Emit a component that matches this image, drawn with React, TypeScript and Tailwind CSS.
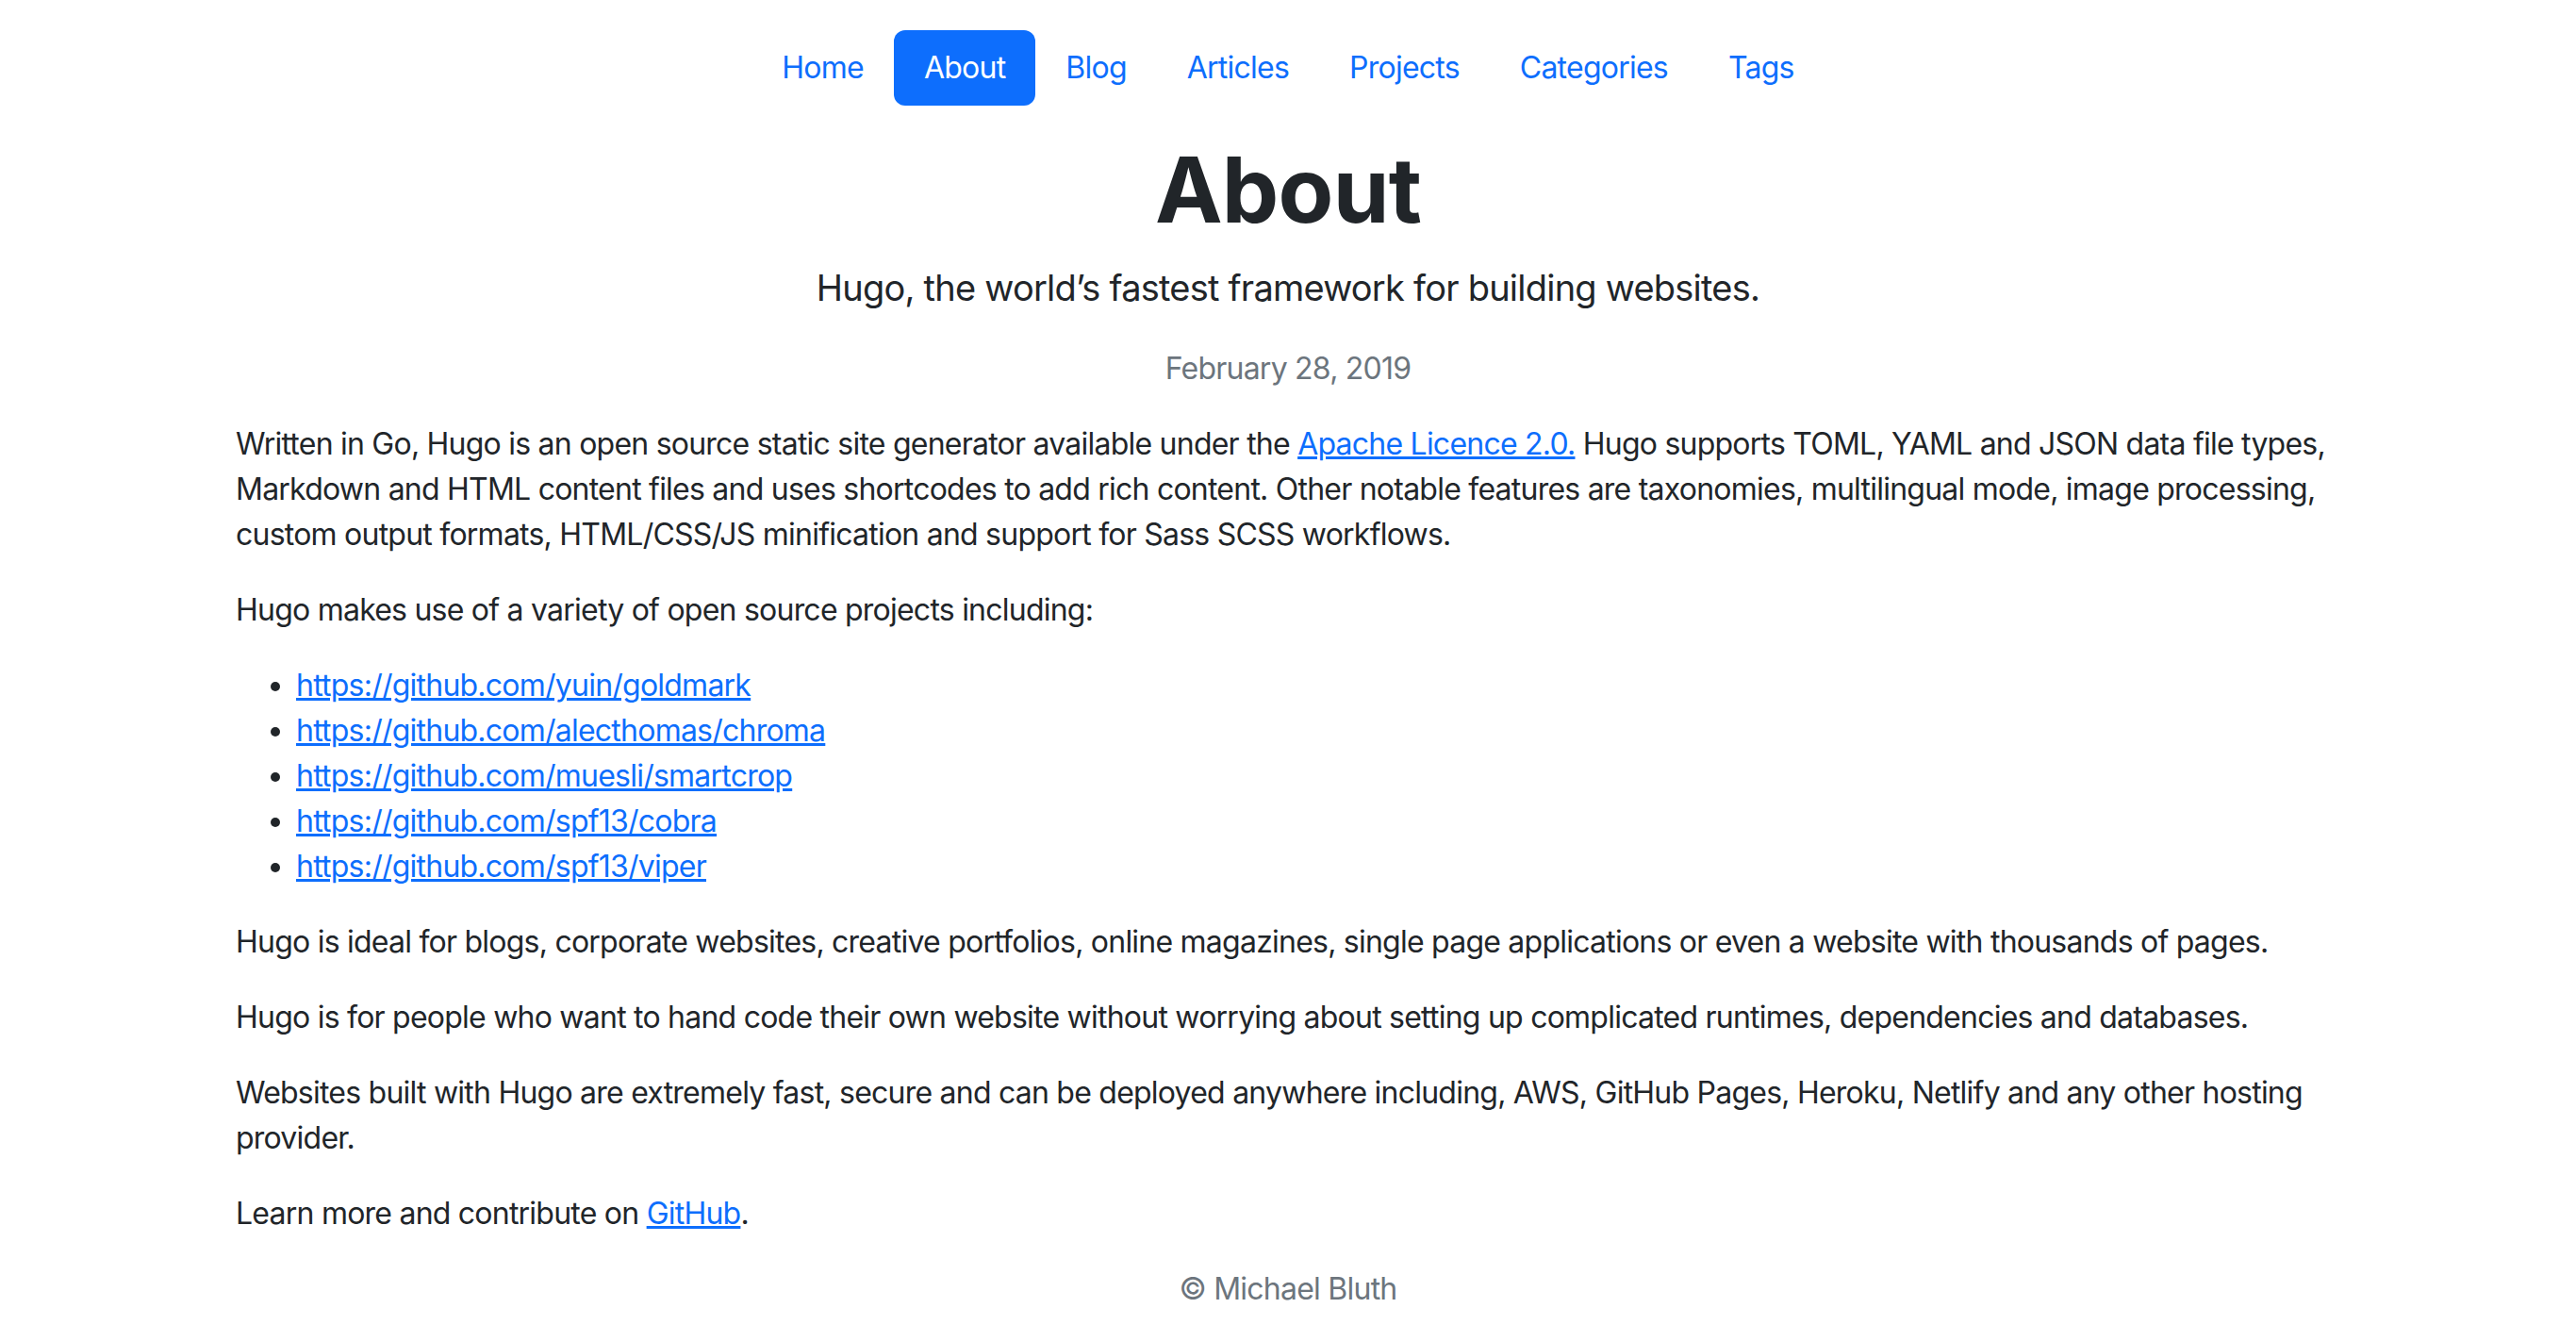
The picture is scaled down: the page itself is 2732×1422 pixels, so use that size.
import React from "react";

const navItems = ["Home", "About", "Blog", "Articles", "Projects", "Categories", "Tags"];

const links = [
  "https://github.com/yuin/goldmark",
  "https://github.com/alecthomas/chroma",
  "https://github.com/muesli/smartcrop",
  "https://github.com/spf13/cobra",
  "https://github.com/spf13/viper",
];

export default function App() {
  return (
    <div
      className="min-h-screen bg-white text-[#212529] text-[32px] leading-[48px] tracking-[-0.024em]"
      style={{ fontFamily: "Inter, 'Noto Sans', 'Liberation Sans', sans-serif" }}
    >
      <header className="pt-[32px]">
        <nav className="flex justify-center">
          {navItems.map((item) => (
            <a
              key={item}
              href="#"
              className={
                item === "About"
                  ? "px-[32px] py-[16px] rounded-[12px] bg-[#0d6efd] text-white"
                  : "px-[32px] py-[16px] rounded-[12px] text-[#0d6efd]"
              }
            >
              {item}
            </a>
          ))}
        </nav>
      </header>
      <main className="mx-auto w-[2280px] px-[24px]">
        <div className="text-center mt-[32px]">
          <h1 className="text-[96px] leading-[115px] font-bold mb-[16px]">About</h1>
          <p className="text-[38px] leading-[60px] mb-[32px]">
            Hugo, the world’s fastest framework for building websites.
          </p>
          <p className="text-[#6c757d] mb-[32px]">February 28, 2019</p>
        </div>
        <p className="mb-[32px]">
          Written in Go, Hugo is an open source static site generator available under the{" "}
          <a href="#" className="text-[#0d6efd] underline">
            Apache Licence 2.0.
          </a>{" "}
          Hugo supports TOML, YAML and JSON data file types, Markdown and HTML content files and uses shortcodes
          to add rich content. Other notable features are taxonomies, multilingual mode, image processing, custom
          output formats, HTML/CSS/JS minification and support for Sass SCSS workflows.
        </p>
        <p className="mb-[32px]">Hugo makes use of a variety of open source projects including:</p>
        <ul className="list-disc pl-[64px] mb-[32px]">
          {links.map((l) => (
            <li key={l}>
              <a href="#" className="text-[#0d6efd] underline">
                {l}
              </a>
            </li>
          ))}
        </ul>
        <p className="mb-[32px]">
          Hugo is ideal for blogs, corporate websites, creative portfolios, online magazines, single page
          applications or even a website with thousands of pages.
        </p>
        <p className="mb-[32px]">
          Hugo is for people who want to hand code their own website without worrying about setting up
          complicated runtimes, dependencies and databases.
        </p>
        <p className="mb-[32px]">
          Websites built with Hugo are extremely fast, secure and can be deployed anywhere including, AWS, GitHub
          Pages, Heroku, Netlify and any other hosting provider.
        </p>
        <p className="mb-[32px]">
          Learn more and contribute on{" "}
          <a href="#" className="text-[#0d6efd] underline">
            GitHub
          </a>
          .
        </p>
      </main>
      <footer className="text-center text-[#6c757d]">© Michael Bluth</footer>
    </div>
  );
}
